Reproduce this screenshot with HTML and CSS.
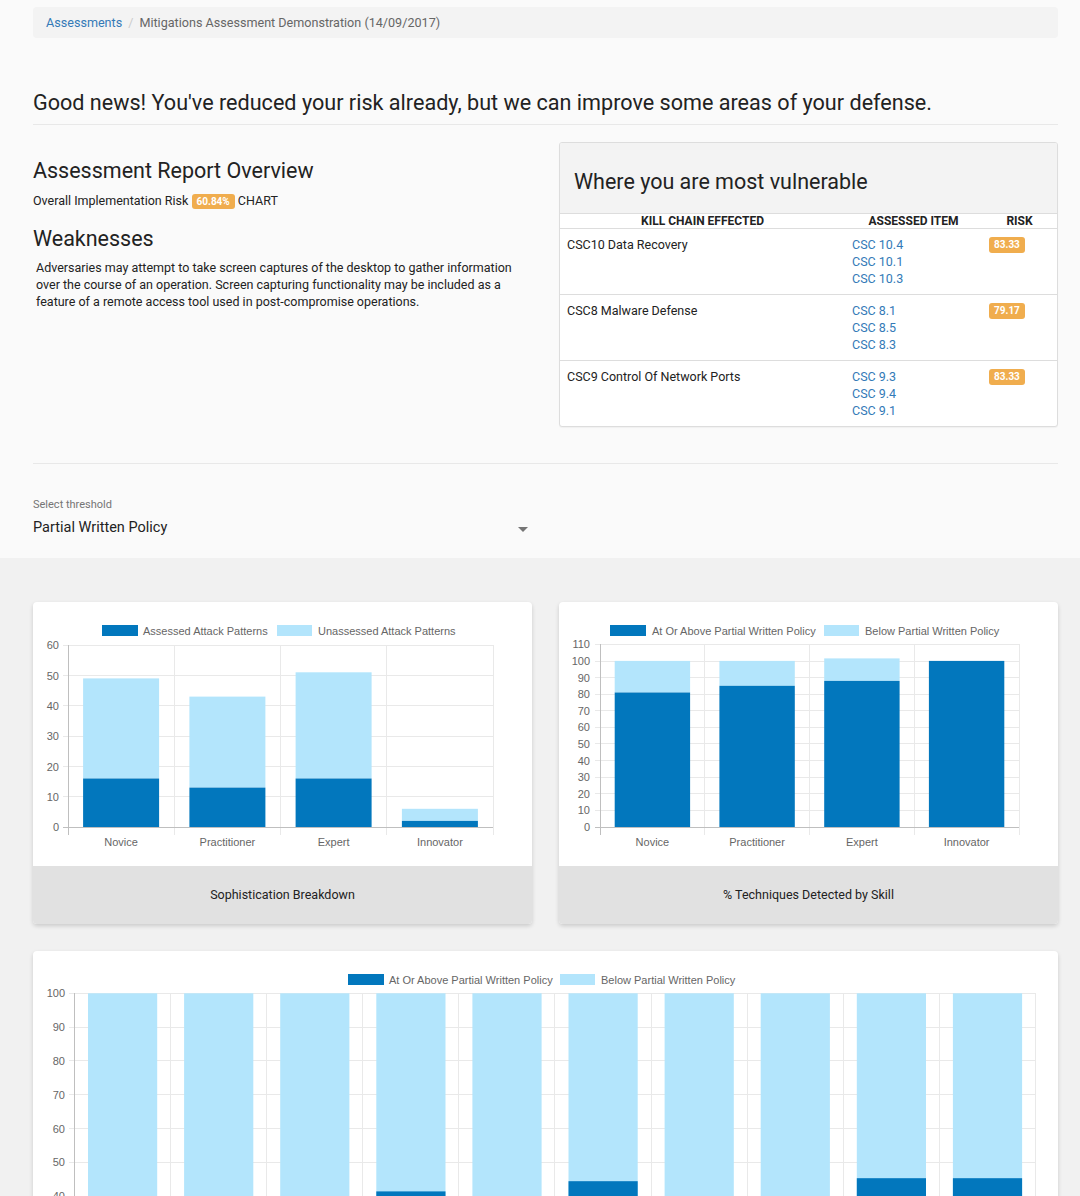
FILE: index.html
```html
<!DOCTYPE html>
<html lang="en">
<head>
<meta charset="utf-8">
<title>Mitigations Assessment Demonstration</title>
<link rel="stylesheet" href="styles.css">
</head>
<body>
<div class="top">
  <div class="container">
    <ol class="breadcrumb">
      <li><a href="#">Assessments</a></li>
      <li class="sep">/</li>
      <li class="active">Mitigations Assessment Demonstration (14/09/2017)</li>
    </ol>

    <div class="page-header">
      <h1>Good news! You've reduced your risk already, but we can improve some areas of your defense.</h1>
    </div>

    <div class="overview-row">
      <div class="overview">
        <h3 class="first">Assessment Report Overview</h3>
        <p class="risk-line">Overall Implementation Risk <span class="badge">60.84%</span> CHART</p>
        <h3 class="second">Weaknesses</h3>
        <p class="weak-text">Adversaries may attempt to take screen captures of the desktop to gather information over the course of an operation. Screen capturing functionality may be included as a feature of a remote access tool used in post-compromise operations.</p>
      </div>

      <div class="panel">
        <div class="panel-heading">Where you are most vulnerable</div>
        <table class="vuln">
          <thead>
            <tr><th class="c1">Kill Chain Effected</th><th class="c2">Assessed Item</th><th class="c3">Risk</th></tr>
          </thead>
          <tbody>
            <tr>
              <td>CSC10 Data Recovery</td>
              <td><a href="#">CSC 10.4</a><br><a href="#">CSC 10.1</a><br><a href="#">CSC 10.3</a></td>
              <td><span class="badge">83.33</span></td>
            </tr>
            <tr>
              <td>CSC8 Malware Defense</td>
              <td><a href="#">CSC 8.1</a><br><a href="#">CSC 8.5</a><br><a href="#">CSC 8.3</a></td>
              <td><span class="badge">79.17</span></td>
            </tr>
            <tr>
              <td>CSC9 Control Of Network Ports</td>
              <td><a href="#">CSC 9.3</a><br><a href="#">CSC 9.4</a><br><a href="#">CSC 9.1</a></td>
              <td><span class="badge">83.33</span></td>
            </tr>
          </tbody>
        </table>
      </div>
    </div>

    <hr class="divider">

    <div class="threshold">
      <div class="threshold-label">Select threshold</div>
      <div class="threshold-select">
        <span>Partial Written Policy</span>
        <span class="caret"></span>
      </div>
    </div>
  </div>
</div>

<div class="charts">
  <div class="container">
    <div class="chart-grid">
      <div class="card">
        <svg class="chart" width="499" height="264" viewBox="0 0 499 264">
          <g class="grid">
            <line x1="30" y1="194.5" x2="460" y2="194.5"/>
            <line x1="30" y1="164.5" x2="460" y2="164.5"/>
            <line x1="30" y1="134.5" x2="460" y2="134.5"/>
            <line x1="30" y1="103.5" x2="460" y2="103.5"/>
            <line x1="30" y1="73.5" x2="460" y2="73.5"/>
            <line x1="30" y1="43.5" x2="460" y2="43.5"/>
            <line x1="141.5" y1="43" x2="141.5" y2="233"/>
            <line x1="247.5" y1="43" x2="247.5" y2="233"/>
            <line x1="353.5" y1="43" x2="353.5" y2="233"/>
            <line x1="460.5" y1="43" x2="460.5" y2="233"/>
          </g>
          <g class="axis">
            <line x1="35.5" y1="43" x2="35.5" y2="233"/>
            <line x1="30" y1="225.5" x2="460" y2="225.5"/>
          </g>
          <g class="bars">
            <rect class="lt" x="50.1" y="76.4" width="76" height="100.1"/>
            <rect class="dk" x="50.1" y="176.5" width="76" height="48.5"/>
            <rect class="lt" x="156.4" y="94.6" width="76" height="91"/>
            <rect class="dk" x="156.4" y="185.6" width="76" height="39.4"/>
            <rect class="lt" x="262.6" y="70.3" width="76" height="106.2"/>
            <rect class="dk" x="262.6" y="176.5" width="76" height="48.5"/>
            <rect class="lt" x="368.9" y="206.8" width="76" height="12.1"/>
            <rect class="dk" x="368.9" y="218.9" width="76" height="6.1"/>
          </g>
          <g class="ylab">
            <text x="26" y="229">0</text>
            <text x="26" y="198.5">10</text>
            <text x="26" y="168.5">20</text>
            <text x="26" y="138">30</text>
            <text x="26" y="107.5">40</text>
            <text x="26" y="77.5">50</text>
            <text x="26" y="47">60</text>
          </g>
          <g class="xlab">
            <text x="88.1" y="244">Novice</text>
            <text x="194.4" y="244">Practitioner</text>
            <text x="300.6" y="244">Expert</text>
            <text x="406.9" y="244">Innovator</text>
          </g>
          <g class="legend">
            <rect class="dk" x="69" y="23" width="36" height="11"/>
            <text x="110" y="32.5">Assessed Attack Patterns</text>
            <rect class="lt" x="244" y="23" width="35" height="11"/>
            <text x="285" y="32.5">Unassessed Attack Patterns</text>
          </g>
        </svg>
        <div class="card-footer">Sophistication Breakdown</div>
      </div>

      <div class="card">
        <svg class="chart" width="499" height="264" viewBox="0 0 499 264">
          <g class="grid">
            <line x1="36" y1="208.5" x2="460" y2="208.5"/>
            <line x1="36" y1="191.5" x2="460" y2="191.5"/>
            <line x1="36" y1="175.5" x2="460" y2="175.5"/>
            <line x1="36" y1="158.5" x2="460" y2="158.5"/>
            <line x1="36" y1="141.5" x2="460" y2="141.5"/>
            <line x1="36" y1="125.5" x2="460" y2="125.5"/>
            <line x1="36" y1="108.5" x2="460" y2="108.5"/>
            <line x1="36" y1="92.5" x2="460" y2="92.5"/>
            <line x1="36" y1="75.5" x2="460" y2="75.5"/>
            <line x1="36" y1="59.5" x2="460" y2="59.5"/>
            <line x1="36" y1="42.5" x2="460" y2="42.5"/>
            <line x1="145.5" y1="42" x2="145.5" y2="233"/>
            <line x1="250.5" y1="42" x2="250.5" y2="233"/>
            <line x1="355.5" y1="42" x2="355.5" y2="233"/>
            <line x1="460.5" y1="42" x2="460.5" y2="233"/>
          </g>
          <g class="axis">
            <line x1="41.5" y1="42" x2="41.5" y2="233"/>
            <line x1="36" y1="225.5" x2="460" y2="225.5"/>
          </g>
          <g class="bars">
            <rect class="lt" x="55.7" y="58.9" width="75.4" height="31.6"/>
            <rect class="dk" x="55.7" y="90.5" width="75.4" height="134.5"/>
            <rect class="lt" x="160.4" y="58.9" width="75.4" height="24.9"/>
            <rect class="dk" x="160.4" y="83.8" width="75.4" height="141.2"/>
            <rect class="lt" x="265.2" y="56.4" width="75.4" height="22.5"/>
            <rect class="dk" x="265.2" y="78.9" width="75.4" height="146.1"/>
            <rect class="dk" x="369.9" y="58.9" width="75.4" height="166.1"/>
          </g>
          <g class="ylab">
            <text x="31" y="229">0</text>
            <text x="31" y="212.4">10</text>
            <text x="31" y="195.8">20</text>
            <text x="31" y="179.2">30</text>
            <text x="31" y="162.6">40</text>
            <text x="31" y="146">50</text>
            <text x="31" y="129.4">60</text>
            <text x="31" y="112.8">70</text>
            <text x="31" y="96.2">80</text>
            <text x="31" y="79.6">90</text>
            <text x="31" y="63">100</text>
            <text x="31" y="46.3">110</text>
          </g>
          <g class="xlab">
            <text x="93.4" y="244">Novice</text>
            <text x="198.1" y="244">Practitioner</text>
            <text x="302.9" y="244">Expert</text>
            <text x="407.6" y="244">Innovator</text>
          </g>
          <g class="legend">
            <rect class="dk" x="51" y="23" width="36" height="11"/>
            <text x="93" y="32.5">At Or Above Partial Written Policy</text>
            <rect class="lt" x="265" y="23" width="35" height="11"/>
            <text x="306" y="32.5">Below Partial Written Policy</text>
          </g>
        </svg>
        <div class="card-footer">% Techniques Detected by Skill</div>
      </div>
    </div>

    <div class="card wide">
      <svg class="chart" width="1025" height="410" viewBox="0 0 1025 410">
        <g class="grid">
          <line x1="36" y1="346.5" x2="1002" y2="346.5"/>
          <line x1="36" y1="312.5" x2="1002" y2="312.5"/>
          <line x1="36" y1="278.5" x2="1002" y2="278.5"/>
          <line x1="36" y1="245.5" x2="1002" y2="245.5"/>
          <line x1="36" y1="211.5" x2="1002" y2="211.5"/>
          <line x1="36" y1="177.5" x2="1002" y2="177.5"/>
          <line x1="36" y1="143.5" x2="1002" y2="143.5"/>
          <line x1="36" y1="109.5" x2="1002" y2="109.5"/>
          <line x1="36" y1="76.5" x2="1002" y2="76.5"/>
          <line x1="36" y1="42.5" x2="1002" y2="42.5"/>
          <line x1="137.5" y1="42" x2="137.5" y2="388"/>
          <line x1="233.5" y1="42" x2="233.5" y2="388"/>
          <line x1="329.5" y1="42" x2="329.5" y2="388"/>
          <line x1="425.5" y1="42" x2="425.5" y2="388"/>
          <line x1="521.5" y1="42" x2="521.5" y2="388"/>
          <line x1="618.5" y1="42" x2="618.5" y2="388"/>
          <line x1="714.5" y1="42" x2="714.5" y2="388"/>
          <line x1="810.5" y1="42" x2="810.5" y2="388"/>
          <line x1="906.5" y1="42" x2="906.5" y2="388"/>
          <line x1="1002.5" y1="42" x2="1002.5" y2="388"/>
        </g>
        <g class="axis">
          <line x1="41.5" y1="42" x2="41.5" y2="388"/>
          <line x1="36" y1="380.5" x2="1002" y2="380.5"/>
        </g>
        <g class="bars">
          <rect class="lt" x="55" y="42.3" width="69.2" height="338"/>
          <rect class="dk" x="55" y="278.9" width="69.2" height="101.4"/>
          <rect class="lt" x="151.1" y="42.3" width="69.2" height="338"/>
          <rect class="dk" x="151.1" y="312.7" width="69.2" height="67.6"/>
          <rect class="lt" x="247.2" y="42.3" width="69.2" height="338"/>
          <rect class="dk" x="247.2" y="278.9" width="69.2" height="101.4"/>
          <rect class="lt" x="343.3" y="42.3" width="69.2" height="338"/>
          <rect class="dk" x="343.3" y="240.4" width="69.2" height="139.9"/>
          <rect class="lt" x="439.4" y="42.3" width="69.2" height="338"/>
          <rect class="dk" x="439.4" y="312.7" width="69.2" height="67.6"/>
          <rect class="lt" x="535.5" y="42.3" width="69.2" height="338"/>
          <rect class="dk" x="535.5" y="230.2" width="69.2" height="150.1"/>
          <rect class="lt" x="631.6" y="42.3" width="69.2" height="338"/>
          <rect class="dk" x="631.6" y="329.6" width="69.2" height="50.7"/>
          <rect class="lt" x="727.7" y="42.3" width="69.2" height="338"/>
          <rect class="dk" x="727.7" y="278.9" width="69.2" height="101.4"/>
          <rect class="lt" x="823.8" y="42.3" width="69.2" height="338"/>
          <rect class="dk" x="823.8" y="227.2" width="69.2" height="153.1"/>
          <rect class="lt" x="919.9" y="42.3" width="69.2" height="338"/>
          <rect class="dk" x="919.9" y="227.2" width="69.2" height="153.1"/>
        </g>
        <g class="ylab">
          <text x="32" y="384.3">0</text>
          <text x="32" y="350.5">10</text>
          <text x="32" y="316.7">20</text>
          <text x="32" y="282.9">30</text>
          <text x="32" y="249.1">40</text>
          <text x="32" y="215.3">50</text>
          <text x="32" y="181.5">60</text>
          <text x="32" y="147.7">70</text>
          <text x="32" y="113.9">80</text>
          <text x="32" y="80.1">90</text>
          <text x="32" y="46.3">100</text>
        </g>
        <g class="legend">
          <rect class="dk" x="315" y="23" width="36" height="11"/>
          <text x="356" y="32.5">At Or Above Partial Written Policy</text>
          <rect class="lt" x="527" y="23" width="35" height="11"/>
          <text x="568" y="32.5">Below Partial Written Policy</text>
        </g>
      </svg>
      <div class="card-footer">% Techniques Detected by Control</div>
    </div>
  </div>
</div>
</body>
</html>
```

FILE: styles.css
```css
* { box-sizing: border-box; }

html, body {
  margin: 0;
  padding: 0;
}

body {
  font-family: Roboto, "Liberation Sans", Arial, sans-serif;
  color: #222;
  background: #f1f1f1;
  font-size: 13px;
}

.top {
  background: #fafafa;
  padding-top: 7px;
  padding-bottom: 20px;
}

.container {
  margin-left: 33px;
  width: 1025px;
}

.breadcrumb {
  list-style: none;
  margin: 0;
  padding: 8px 13px;
  background: #f3f3f3;
  border-radius: 4px;
  display: flex;
  font-size: 12.6px;
  line-height: 15px;
}

.breadcrumb a {
  color: #337ab7;
  text-decoration: none;
}

.breadcrumb .sep {
  color: #ccc;
  padding: 0 6px;
}

.breadcrumb .active {
  color: #666;
}

.page-header {
  margin-top: 53px;
  padding-bottom: 9px;
  border-bottom: 1px solid #e8e8e8;
}

.page-header h1 {
  margin: 0;
  font-size: 21.6px;
  line-height: 24px;
  font-weight: 400;
  color: #222;
}

.overview-row {
  display: flex;
  justify-content: space-between;
  margin-top: 17px;
}

.overview {
  width: 499px;
}

.overview h3 {
  margin: 0;
  font-size: 21.5px;
  line-height: 24px;
  font-weight: 400;
  color: #222;
}

.overview h3.first { margin-top: 17px; }
.overview h3.second { margin-top: 18px; }

.risk-line {
  margin: 9px 0 0;
  line-height: 17px;
  font-size: 12.5px;
}

.badge {
  display: inline-block;
  background: #f0ad4e;
  color: #fff;
  font-weight: 700;
  font-size: 10px;
  line-height: 16px;
  padding: 0 5px;
  border-radius: 3px;
  vertical-align: middle;
}

.risk-line .badge {
  vertical-align: 0;
  line-height: 15px;
  padding: 0 5px;
}

.weak-text {
  margin: 8px 0 0;
  padding-left: 3px;
  line-height: 17px;
  font-size: 12.5px;
}

.panel {
  width: 499px;
  border: 1px solid #ddd;
  border-radius: 3px;
  background: #fff;
  overflow: hidden;
  box-shadow: 0 1px 1px rgba(0,0,0,0.04);
}

.panel-heading {
  background: #f3f3f3;
  padding: 27px 14px 19px;
  font-size: 21.5px;
  line-height: 24px;
  color: #222;
  border-bottom: 1px solid #ddd;
}

.vuln {
  width: 100%;
  border-collapse: collapse;
  font-size: 12.5px;
}

.vuln th {
  font-size: 12px;
  font-weight: 700;
  text-transform: uppercase;
  line-height: 14px;
  padding: 0 7px;
  text-align: center;
  border-bottom: 1px solid #ddd;
  color: #222;
}

.vuln .c1 { width: 285px; }
.vuln .c2 { width: 137px; }

.vuln td {
  vertical-align: top;
  padding: 7px 7px;
  line-height: 17px;
  border-top: 1px solid #ddd;
  color: #222;
}

.vuln tbody tr:first-child td { border-top: none; }

.vuln td a {
  color: #337ab7;
  text-decoration: none;
}

.vuln td .badge {
  margin-top: 1px;
  vertical-align: top;
}

.divider {
  margin: 36px 0 0;
  border: 0;
  border-top: 1px solid #e8e8e8;
}

.threshold {
  width: 499px;
  padding-top: 34px;
}

.threshold-label {
  font-size: 11px;
  line-height: 13px;
  color: #757575;
}

.threshold-select {
  margin-top: 7px;
  display: flex;
  justify-content: space-between;
  align-items: center;
  font-size: 14.5px;
  line-height: 20px;
  color: #222;
  padding-right: 4px;
}

.caret {
  width: 0;
  height: 0;
  border-left: 5px solid transparent;
  border-right: 5px solid transparent;
  border-top: 5px solid #757575;
  margin-top: 2px;
}

.charts {
  background: #f1f1f1;
  padding-top: 44px;
  padding-bottom: 40px;
}

.chart-grid {
  display: grid;
  grid-template-columns: 499px 499px;
  column-gap: 27px;
}

.card {
  background: #fff;
  border-radius: 4px;
  overflow: hidden;
  box-shadow: 0 2px 4px rgba(0,0,0,0.16);
}

.card.wide {
  margin-top: 27px;
}

.chart {
  display: block;
}

.card-footer {
  background: #e1e1e1;
  height: 58px;
  line-height: 58px;
  text-align: center;
  font-size: 12.5px;
  color: #222;
}

.grid line {
  stroke: #e9e9e9;
  stroke-width: 1;
}

.axis line {
  stroke: #bfbfbf;
  stroke-width: 1;
}

.dk { fill: #0277bd; }
.lt { fill: #b3e5fc; }

.ylab text,
.xlab text,
.legend text {
  font-family: "Liberation Sans", Arial, sans-serif;
  font-size: 11px;
  fill: #666;
}

.ylab text { text-anchor: end; }
.xlab text { text-anchor: middle; }
```
